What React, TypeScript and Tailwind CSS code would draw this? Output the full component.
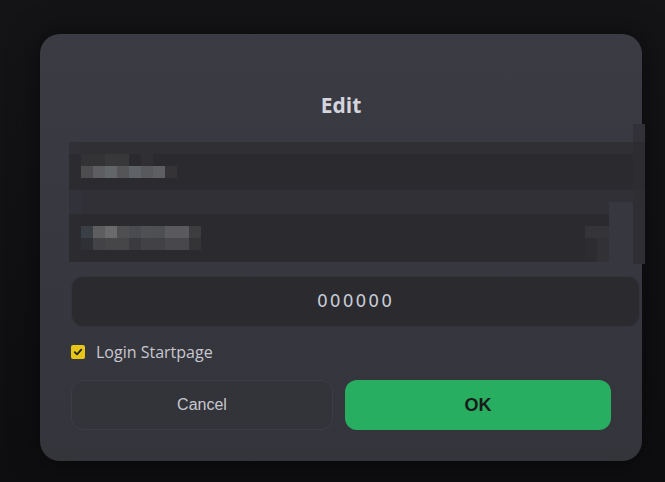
import React from "react";

type R = [number, number, number, number, string];

// mosaic rects relative to (69,124)
const rects: R[] = [
  // right edge column
  [564, 0, 12, 18, "#313137"],
  [564, 18, 12, 48, "#2c2c31"],
  [564, 66, 12, 74, "#2e2e33"],
  // row 1
  [0, 18, 564, 12, "#2f2f34"],
  [0, 30, 564, 36, "#2a2a2f"],
  [0, 18, 12, 12, "#303036"],
  [0, 30, 12, 36, "#2b2b30"],
  // band between
  [0, 66, 564, 24, "#303036"],
  [0, 66, 12, 24, "#32323a"],
  [540, 78, 24, 12, "#37373f"],
  // row 2
  [0, 90, 540, 48, "#2a2a2f"],
  [0, 90, 12, 48, "#2b2b30"],
  [540, 90, 24, 48, "#37373f"],
  // row1 text blocks top
  [12, 30, 24, 12, "#333336"],
  [36, 30, 24, 12, "#38383b"],
  [60, 30, 12, 12, "#2b2b2f"],
  [72, 30, 12, 12, "#303034"],
  // row1 text blocks bottom
  [12, 42, 12, 12, "#4d4d50"],
  [24, 42, 12, 12, "#5d5e62"],
  [36, 42, 12, 12, "#636668"],
  [48, 42, 12, 12, "#555558"],
  [60, 42, 12, 12, "#5f6267"],
  [72, 42, 12, 12, "#58595c"],
  [84, 42, 12, 12, "#5e5f63"],
  [96, 42, 12, 12, "#353336"],
  // row2 text blocks top
  [12, 102, 12, 12, "#3a3f46"],
  [24, 102, 12, 12, "#5d5d60"],
  [36, 102, 12, 12, "#6a696c"],
  [48, 102, 12, 12, "#4f4f52"],
  [60, 102, 12, 12, "#4a4b50"],
  [72, 102, 12, 12, "#4f5053"],
  [84, 102, 12, 12, "#4e4f53"],
  [96, 102, 24, 12, "#5a5a5e"],
  [120, 102, 12, 12, "#3d3d40"],
  // row2 text blocks bottom
  [12, 114, 12, 12, "#2f3035"],
  [24, 114, 12, 12, "#434347"],
  [36, 114, 24, 12, "#464548"],
  [60, 114, 12, 12, "#3b3b3f"],
  [72, 114, 24, 12, "#424246"],
  [96, 114, 24, 12, "#48484c"],
  [120, 114, 12, 12, "#343437"],
  // row2 right blocks
  [516, 102, 24, 12, "#353539"],
  [516, 114, 12, 24, "#2c2c31"],
  [528, 114, 12, 24, "#313136"],
];

function Mosaic() {
  return (
    <svg width="576" height="140" viewBox="0 0 576 140" className="ml-[29px] mt-[5px] block shrink-0 overflow-visible" shapeRendering="crispEdges">
      {rects.map(([x, y, w, h, c], i) => (
        <rect key={i} x={x} y={y} width={w} height={h} fill={c} />
      ))}
    </svg>
  );
}

export default function App() {
  return (
    <div className="w-[665px] h-[482px] overflow-hidden bg-[linear-gradient(180deg,#141417_0%,#0e0e10_100%)] pt-[34px] pl-[40px]">
      <div className="w-[602px] h-[427px] rounded-[20px] bg-[linear-gradient(180deg,#3b3b44_0%,#34343b_100%)] shadow-[0_0_30px_rgba(0,0,0,0.5)] flex flex-col pt-[57px]">
        <div className="text-center text-[21px] leading-[28px] font-bold text-[#d4d4dc] font-['Open_Sans',sans-serif]">
          Edit
        </div>
        <Mosaic />
        <div className="ml-[31px] mt-[12px] w-[569px] h-[51px] rounded-[12px] bg-[#2a2a2f] border border-[#33333a] flex items-center justify-center">
          <span className="font-['DejaVu_Sans',sans-serif] text-[17px] tracking-[2px] text-[#c8ccd6]">000000</span>
        </div>
        <div className="ml-[31px] mt-[15px] h-[20px] flex items-center gap-[11px]">
          <div className="w-[14px] h-[14px] rounded-[2px] bg-[#e6c619] flex items-center justify-center">
            <svg width="10" height="10" viewBox="0 0 10 10">
              <path d="M1.8 5.2 L4 7.3 L8.3 2.6" fill="none" stroke="#222" strokeWidth="1.8" strokeLinecap="round" strokeLinejoin="round" />
            </svg>
          </div>
          <span className="font-['Open_Sans',sans-serif] text-[16px] text-[#c8c8d0]">Login Startpage</span>
        </div>
        <div className="ml-[31px] mt-[18px] flex gap-[12px]">
          <button className="w-[262px] h-[50px] rounded-[12px] border border-[#3d3d45] bg-[#33333a] font-['Liberation_Sans',sans-serif] text-[16px] text-[#c8c8d0]">
            Cancel
          </button>
          <button className="w-[266px] h-[50px] rounded-[12px] bg-[#27ae60] font-['Liberation_Sans',sans-serif] font-bold text-[18px] text-[#1a1a1a]">
            OK
          </button>
        </div>
      </div>
    </div>
  );
}
